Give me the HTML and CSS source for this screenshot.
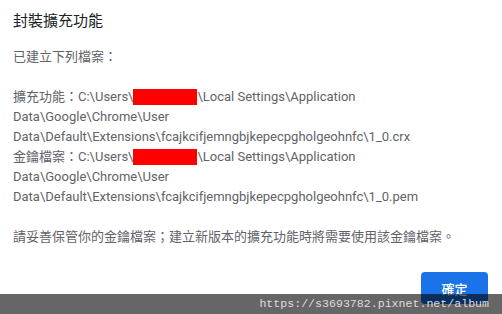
FILE: index.html
```html
<!DOCTYPE html>
<html lang="zh-Hant">
<head>
    <meta charset="utf-8">
    <link rel="stylesheet" href="styles.css">
</head>
<body>
    <div class="dialog">
        <h1 class="title">封裝擴充功能</h1>
        <p class="text">已建立下列檔案：</p>
        <div class="files">
            <p class="text">擴充功能：C:\Users\<span class="hidden"></span>\Local Settings\Application Data\Google\Chrome\User Data\Default\Extensions\fcajkcifjemngbjkepecpgholgeohnfc\1_0.crx</p>
            <p class="text">金鑰檔案：C:\Users\<span class="hidden"></span>\Local Settings\Application Data\Google\Chrome\User Data\Default\Extensions\fcajkcifjemngbjkepecpgholgeohnfc\1_0.pem</p>
        </div>
        <p class="text">請妥善保管你的金鑰檔案；建立新版本的擴充功能時將需要使用該金鑰檔案。</p>
        <div class="actions">
            <button class="ok">確定</button>
        </div>
    </div>
    <div class="watermark">https://s3693782.pixnet.net/album</div>
</body>
</html>
```

FILE: styles.css
```css
body {
    margin: 0;
    background-color: white;
    font-family: Roboto, "Noto Sans CJK TC", sans-serif;
    overflow: hidden;
}

.dialog {
    padding: 11px 14px 0 13px;
}

.title {
    margin: 0;
    font-size: 15px;
    font-weight: normal;
    line-height: 20px;
    color: #202124;
}

.text {
    margin: 0;
    font-size: 13px;
    line-height: 20px;
    color: #5f6368;
}

.title + .text {
    margin-top: 16px;
}

.files {
    margin: 20px 0;
}

.hidden {
    display: inline-block;
    width: 64px;
    height: 16px;
    vertical-align: -4px;
    background-color: red;
}

.actions {
    display: flex;
    justify-content: flex-end;
    margin-top: 25px;
}

.ok {
    width: 67px;
    height: 32px;
    border: none;
    border-radius: 4px;
    background-color: #1a73e8;
    color: white;
    font-family: Roboto, "Noto Sans CJK TC", sans-serif;
    font-size: 13px;
    font-weight: 500;
}

.watermark {
    position: absolute;
    left: 0;
    right: 0;
    bottom: 0;
    height: 20px;
    padding-right: 13px;
    background-color: rgba(0, 0, 0, 0.6);
    color: #ddd;
    font-family: "Liberation Mono", monospace;
    font-size: 11.6px;
    line-height: 20px;
    text-align: right;
}
```
